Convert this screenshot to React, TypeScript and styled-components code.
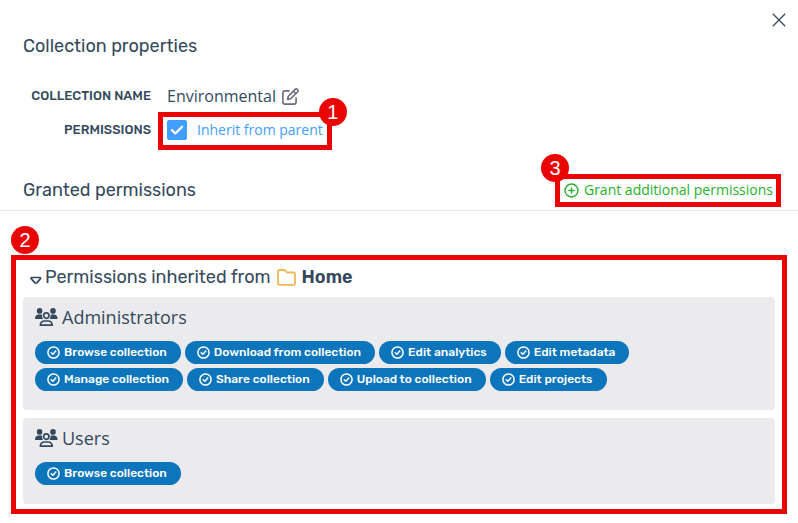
import React from "react";
import styled, { createGlobalStyle } from "styled-components";

const ink = "#34495e";
const red = "#ea0505";
const display = `Rubik, Roboto, "Liberation Sans", sans-serif`;
const body = `"Open Sans", "Noto Sans", sans-serif`;

const GlobalStyle = createGlobalStyle`
  * { box-sizing: border-box; }
  body { margin: 0; background: #fff; color: ${ink}; font-family: ${body}; }
  button { border: 0; padding: 0; margin: 0; background: none; font: inherit; color: inherit; cursor: pointer; }
  h1, h2, h3, ul { margin: 0; padding: 0; font-weight: 400; }
  svg { display: block; flex: none; }
`;

const Panel = styled.main`
  display: flex;
  flex-direction: column;
  padding-bottom: 19px;
`;

const TopBar = styled.div`
  display: flex;
  justify-content: flex-end;
  padding: 13px 12px 0;
`;

const SectionTitle = styled.h1`
  font: 400 18px/24px ${display};
`;

const Header = styled.header`
  padding: 7px 24px 0 23px;
`;

const Fields = styled.div`
  display: grid;
  grid-template-columns: 128px 1fr;
  column-gap: 16px;
  row-gap: 10px;
  align-items: center;
  padding: 26px 24px 0 23px;
`;

const FieldLabel = styled.span`
  text-align: right;
  text-transform: uppercase;
  white-space: nowrap;
  font: 500 13px/24px ${display};
`;

const NameValue = styled.div`
  display: flex;
  align-items: center;
  gap: 6px;
  font-size: 16px;
  line-height: 24px;
`;

const EditButton = styled.button`
  color: #6b6b7b;
`;

const CheckLabel = styled.label`
  position: relative;
  justify-self: start;
  display: flex;
  align-items: center;
  gap: 10px;
  color: #409eff;
  font-size: 14px;
  line-height: 24px;
  cursor: pointer;
`;

const Checkbox = styled.input`
  appearance: none;
  width: 20px;
  height: 20px;
  margin: 0;
  border-radius: 2px;
  border: 1px solid #409eff;
  &:checked {
    background: #409eff
      url("data:image/svg+xml,%3Csvg xmlns='http://www.w3.org/2000/svg' viewBox='0 0 18 18'%3E%3Cpath d='M4 9.2l3.3 3.3L14 5.8' fill='none' stroke='white' stroke-width='2.4' stroke-linecap='round' stroke-linejoin='round'/%3E%3C/svg%3E")
      center / 18px no-repeat;
  }
`;

const GrantedBar = styled.div`
  display: flex;
  align-items: center;
  justify-content: space-between;
  margin-top: 36px;
  padding: 0 25px 8px 23px;
  border-bottom: 1px solid #e6e6e8;
`;

const GrantButton = styled.button`
  position: relative;
  display: flex;
  align-items: center;
  gap: 5px;
  color: #25b12b;
  font-size: 14px;
  line-height: 24px;
`;

const Inherited = styled.section`
  position: relative;
  display: flex;
  flex-direction: column;
  gap: 8px;
  margin: 54px 23px 0;
`;

const InheritedTitle = styled.h2`
  display: flex;
  align-items: center;
  padding-left: 7px;
  font: 400 18px/24px ${display};
`;

const Toggle = styled.button`
  display: flex;
  align-items: center;
  gap: 3px;
`;

const Source = styled.strong`
  display: flex;
  align-items: center;
  gap: 6px;
  margin-left: 6px;
  font-weight: 600;
`;

const Card = styled.article`
  padding: 8px 12px 19px;
  border-radius: 4px;
  background: #ebebed;
`;

const GroupName = styled.h3`
  display: flex;
  align-items: center;
  gap: 4px;
  font-size: 18px;
  line-height: 24px;
`;

const Pills = styled.ul`
  display: flex;
  flex-wrap: wrap;
  gap: 4px;
  max-width: 620px;
  margin-top: 12px;
  list-style: none;
`;

const Pill = styled.li`
  display: flex;
  align-items: center;
  gap: 4px;
  padding: 0 14px 0 12px;
  border-radius: 12px;
  background: #0c75bb;
  color: #fff;
  white-space: nowrap;
  font: 500 12px/23px ${display};
`;

const Frame = styled.span<{ $inset: string }>`
  position: absolute;
  inset: ${(p) => p.$inset};
  border: 5px solid ${red};
  pointer-events: none;
`;

const Marker = styled.span<{ $place: string }>`
  position: absolute;
  ${(p) => p.$place};
  width: 28px;
  border-radius: 50%;
  background: ${red};
  color: #fff;
  text-align: center;
  font: 400 20px/28px "Liberation Sans", Arial, sans-serif;
`;

function CloseIcon() {
  return (
    <svg width="14" height="14" viewBox="0 0 14 14" fill="none" stroke={ink} strokeWidth="1.3">
      <path d="M.8.8l12.4 12.4M13.2.8L.8 13.2" />
    </svg>
  );
}

function EditIcon() {
  return (
    <svg width="17" height="17" viewBox="0 0 17 17" fill="none" stroke="currentColor" strokeWidth="1.6" strokeLinecap="round" strokeLinejoin="round">
      <path d="M7 2.9H3A2.1 2.1 0 0 0 .9 5v9A2.1 2.1 0 0 0 3 16.1h9a2.1 2.1 0 0 0 2.1-2.1v-4" />
      <path d="M5.6 11.4l.7-3.1 6.9-6.9a1.5 1.5 0 0 1 2.1 0l.3.3a1.5 1.5 0 0 1 0 2.1l-6.9 6.9z" />
      <path d="M11.5 3.2l2.3 2.3" />
    </svg>
  );
}

function PlusIcon() {
  return (
    <svg width="15" height="15" viewBox="0 0 15 15" fill="none" stroke="currentColor" strokeWidth="1.4" strokeLinecap="round">
      <circle cx="7.5" cy="7.5" r="6.5" />
      <path d="M7.5 4.9v5.2M4.9 7.5h5.2" />
    </svg>
  );
}

function CheckIcon() {
  return (
    <svg width="13" height="13" viewBox="0 0 13 13" fill="none" stroke="currentColor" strokeWidth="1.5" strokeLinecap="round" strokeLinejoin="round">
      <circle cx="6.5" cy="6.5" r="5.6" />
      <path d="M4.2 6.7l1.6 1.6 3-3.3" />
    </svg>
  );
}

function FolderIcon() {
  return (
    <svg width="19" height="17" viewBox="0 0 19 17" fill="none" stroke="#f0b955" strokeWidth="1.8" strokeLinejoin="round">
      <path d="M2.7 1h4.2c.5 0 .9.2 1.2.5l1.5 1.5c.3.3.7.5 1.2.5h5.5c1 0 1.7.7 1.7 1.7v9c0 1-.7 1.7-1.7 1.7H2.7c-1 0-1.7-.7-1.7-1.7V2.7C1 1.7 1.7 1 2.7 1z" />
    </svg>
  );
}

function CaretIcon() {
  return (
    <svg width="12" height="24" viewBox="0 0 12 24" fill="none" stroke="currentColor" strokeWidth="1.7" strokeLinejoin="round">
      <path d="M1.6 12.5h8.1c.9 0 1.1.6.8 1.1L7 17.6a1.6 1.6 0 0 1-2.3 0L1.2 13.6c-.3-.5-.1-1.1.4-1.1z" />
    </svg>
  );
}

function GroupIcon() {
  return (
    <svg width="23" height="18" viewBox="0 0 23 18" fill="none">
      <g fill={ink}>
        <circle cx="4.6" cy="2.9" r="2.8" />
        <circle cx="18" cy="2.9" r="2.8" />
        <path d="M0 10.6C0 8 1.7 6.6 3.8 6.6h2c.5 0 .9.1 1.3.3a4.8 4.8 0 0 0 .9 4H.4a.4.4 0 0 1-.4-.3z" />
        <path d="M22.6 10.6c0-2.6-1.7-4-3.8-4h-2c-.5 0-.9.1-1.3.3a4.8 4.8 0 0 1-.9 4h7.6c.2 0 .4-.1.4-.3z" />
      </g>
      <g stroke={ink} strokeWidth="1.7" strokeLinejoin="round">
        <circle cx="11.3" cy="7.6" r="2.7" />
        <path d="M5.3 17.1c.3-2.4 1.9-4.1 4.1-4.1h3.8c2.2 0 3.8 1.7 4.1 4.1z" />
      </g>
    </svg>
  );
}

const groups = [
  {
    name: "Administrators",
    permissions: [
      "Browse collection",
      "Download from collection",
      "Edit analytics",
      "Edit metadata",
      "Manage collection",
      "Share collection",
      "Upload to collection",
      "Edit projects",
    ],
  },
  { name: "Users", permissions: ["Browse collection"] },
];

export default function App() {
  return (
    <Panel>
      <GlobalStyle />
      <TopBar>
        <button type="button" aria-label="Close"><CloseIcon /></button>
      </TopBar>
      <Header>
        <SectionTitle>Collection properties</SectionTitle>
      </Header>
      <Fields>
        <FieldLabel>Collection name</FieldLabel>
        <NameValue>
          Environmental
          <EditButton type="button" aria-label="Edit collection name">
            <EditIcon />
          </EditButton>
        </NameValue>
        <FieldLabel>Permissions</FieldLabel>
        <CheckLabel>
          <Checkbox type="checkbox" defaultChecked />
          Inherit from parent
          <Frame $inset="-6px -9px -8px" />
          <Marker $place="top: -20px; right: -24px">1</Marker>
        </CheckLabel>
      </Fields>
      <GrantedBar>
        <SectionTitle as="h2">Granted permissions</SectionTitle>
        <GrantButton type="button">
          <PlusIcon />
          Grant additional permissions
          <Frame $inset="-4px -8px -5px -9px" />
          <Marker $place="top: -24px; left: -23px">3</Marker>
        </GrantButton>
      </GrantedBar>
      <Inherited>
        <InheritedTitle>
          <Toggle type="button" aria-expanded="true">
            <CaretIcon />
            Permissions inherited from
          </Toggle>
          <Source>
            <FolderIcon />
            Home
          </Source>
        </InheritedTitle>
        {groups.map((group) => (
          <Card key={group.name}>
            <GroupName><GroupIcon />{group.name}</GroupName>
            <Pills>
              {group.permissions.map((permission) => (
                <Pill key={permission}>
                  <CheckIcon />
                  {permission}
                </Pill>
              ))}
            </Pills>
          </Card>
        ))}
        <Frame $inset="-10px -12px" />
        <Marker $place="top: -39px; left: -12px">2</Marker>
      </Inherited>
    </Panel>
  );
}
